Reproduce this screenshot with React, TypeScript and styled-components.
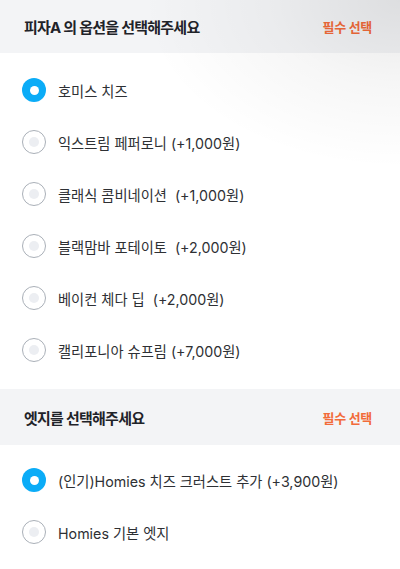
import React from "react";
import styled, { createGlobalStyle } from "styled-components";

const Global = createGlobalStyle`
  html, body { margin: 0; padding: 0; background: #fff; }
  body { font-family: Inter, "Noto Sans CJK KR", "Noto Sans", sans-serif; -webkit-font-smoothing: antialiased; }
`;

const Page = styled.div`
  position: relative;
  width: 400px;
  height: 569px;
  overflow: hidden;
  background: #fff;
`;

const CornerShade = styled.div`
  position: absolute;
  top: 0;
  right: 0;
  width: 260px;
  height: 170px;
  pointer-events: none;
  background: radial-gradient(ellipse at 100% 0%, rgba(0,0,0,0.09) 0%, rgba(0,0,0,0.035) 35%, rgba(0,0,0,0) 70%);
`;

const Section = styled.section`
  display: flex;
  flex-direction: column;
`;

const Header = styled.div<{ $h: number }>`
  display: flex;
  align-items: center;
  justify-content: space-between;
  height: ${p => p.$h}px;
  padding: 0 28px 0 24px;
  background: #f3f4f6;
`;

const Title = styled.h2`
  margin: 0;
  font-size: 15px;
  font-weight: 700;
  color: #1f2329;
  letter-spacing: -0.75px;
`;

const Required = styled.span`
  font-size: 13px;
  font-weight: 700;
  color: #f26b3a;
  letter-spacing: -0.3px;
`;

const List = styled.ul<{ $pt: number; $pb: number }>`
  list-style: none;
  margin: 0;
  padding: ${p => p.$pt}px 0 ${p => p.$pb}px;
`;

const Item = styled.li`
  display: flex;
  align-items: center;
  gap: 12px;
  height: 52px;
  padding-left: 22px;
`;

const Radio = styled.span<{ $on: boolean }>`
  box-sizing: border-box;
  width: 24px;
  height: 24px;
  border-radius: 50%;
  display: flex;
  align-items: center;
  justify-content: center;
  flex-shrink: 0;
  background: ${p => (p.$on ? "#0bacf7" : "#fff")};
  border: ${p => (p.$on ? "none" : "1.5px solid #aab0b8")};
  &::after {
    content: "";
    width: ${p => (p.$on ? 9 : 10)}px;
    height: ${p => (p.$on ? 9 : 10)}px;
    border-radius: 50%;
    background: ${p => (p.$on ? "#fff" : "#eceef2")};
  }
`;

const Label = styled.span`
  font-size: 14.25px;
  color: #2e3034;
  white-space: pre;
`;

type Opt = { label: string; on?: boolean };

const pizza: Opt[] = [
  { label: "호미스 치즈", on: true },
  { label: "익스트림 페퍼로니 (+1,000원)" },
  { label: "클래식 콤비네이션  (+1,000원)" },
  { label: "블랙맘바 포테이토  (+2,000원)" },
  { label: "베이컨 체다 딥  (+2,000원)" },
  { label: "캘리포니아 슈프림 (+7,000원)" },
];

const edge: Opt[] = [
  { label: "(인기)Homies 치즈 크러스트 추가 (+3,900원)", on: true },
  { label: "Homies 기본 엣지" },
];

export default function App() {
  return (
    <Page>
      <Global />
      <Section>
        <Header $h={53}>
          <Title>피자A 의 옵션을 선택해주세요</Title>
          <Required>필수 선택</Required>
        </Header>
        <List $pt={11} $pb={13}>
          {pizza.map(o => (
            <Item key={o.label}>
              <Radio $on={!!o.on} />
              <Label>{o.label}</Label>
            </Item>
          ))}
        </List>
      </Section>
      <Section>
        <Header $h={56}>
          <Title>엣지를 선택해주세요</Title>
          <Required>필수 선택</Required>
        </Header>
        <List $pt={9} $pb={0}>
          {edge.map(o => (
            <Item key={o.label}>
              <Radio $on={!!o.on} />
              <Label>{o.label}</Label>
            </Item>
          ))}
        </List>
      </Section>
      <CornerShade />
    </Page>
  );
}
